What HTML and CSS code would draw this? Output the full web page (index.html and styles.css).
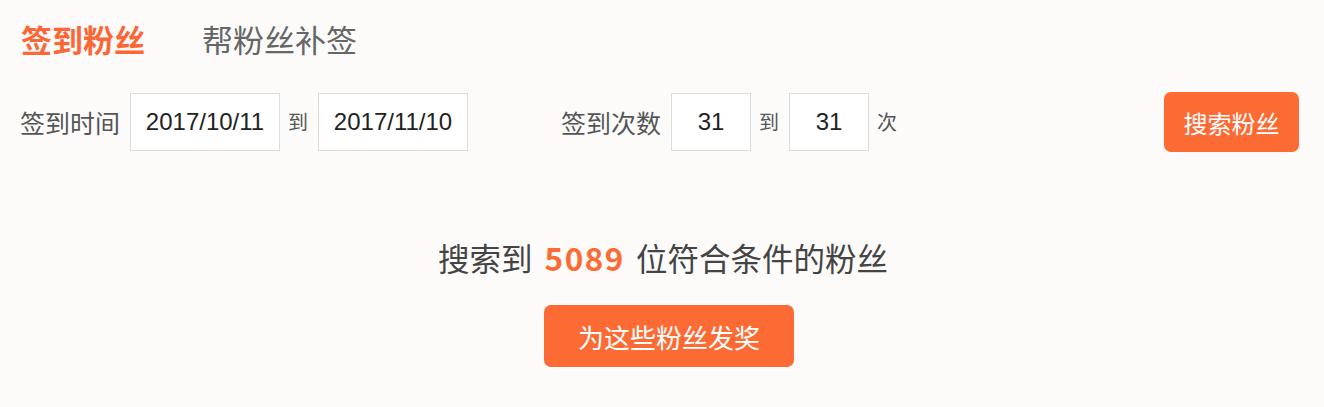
FILE: index.html
```html
<!DOCTYPE html>
<html lang="zh-CN">
<head>
<meta charset="utf-8">
<title>签到粉丝</title>
<link rel="stylesheet" href="styles.css">
</head>
<body>
<div class="page">
  <div class="tabs">
    <span class="tab tab-active">签到粉丝</span>
    <span class="tab">帮粉丝补签</span>
  </div>
  <div class="filter">
    <div class="group">
      <span class="label">签到时间</span>
      <input class="box box-date" type="text" value="2017/10/11" readonly>
      <span class="sep">到</span>
      <input class="box box-date" type="text" value="2017/11/10" readonly>
    </div>
    <div class="group group-count">
      <span class="label">签到次数</span>
      <input class="box box-num" type="text" value="31" readonly>
      <span class="sep">到</span>
      <input class="box box-num" type="text" value="31" readonly>
      <span class="sep">次</span>
    </div>
    <button class="btn btn-search" type="button">搜索粉丝</button>
  </div>
  <div class="result">
    <p class="result-text">搜索到 <strong class="count">5089</strong> 位符合条件的粉丝</p>
    <button class="btn btn-award" type="button">为这些粉丝发奖</button>
  </div>
</div>
</body>
</html>
```

FILE: styles.css
```css
html, body {
  margin: 0;
  padding: 0;
  background: #fcfbfa;
}
body {
  font-family: "Noto Sans CJK SC", "Noto Sans", sans-serif;
  color: #555;
}
.page {
  padding: 0 25px 0 20px;
}
.tabs {
  display: flex;
  align-items: center;
  gap: 57px;
  height: 78px;
  padding-left: 1px;
}
.tab {
  font-size: 31px;
  line-height: 40px;
  color: #666;
}
.tab-active {
  color: #fb6737;
  font-weight: bold;
}
.filter {
  display: flex;
  align-items: center;
  margin-top: 14px;
  height: 60px;
}
.group {
  display: flex;
  align-items: center;
}
.group-count {
  margin-left: 93px;
}
.label {
  font-size: 25px;
  line-height: 30px;
  color: #555;
  margin-right: 10px;
}
.sep {
  font-size: 20px;
  line-height: 30px;
  color: #555;
  margin: 0 10px 0 8px;
}
.box {
  box-sizing: border-box;
  height: 58px;
  margin: 0;
  padding: 0;
  border: 1px solid #dcdcdc;
  background: #fff;
  color: #222;
  font-family: "Liberation Sans", Arial, sans-serif;
  font-size: 24px;
  text-align: center;
  outline: none;
}
.box-date {
  width: 150px;
}
.box-num {
  width: 80px;
}
.btn {
  border: none;
  background: #fd6b35;
  color: #fff;
  font-family: "Noto Sans CJK SC", "Noto Sans", sans-serif;
  border-radius: 7px;
  padding: 0;
  cursor: pointer;
}
.btn-search {
  margin-left: auto;
  width: 135px;
  height: 60px;
  font-size: 24px;
}
.result {
  display: flex;
  flex-direction: column;
  align-items: center;
  padding-top: 85px;
  padding-left: 7px;
}
.result-text {
  margin: 0;
  font-size: 31.5px;
  line-height: 40px;
  color: #444;
}
.count {
  color: #fd6b35;
  font-weight: bold;
  letter-spacing: 1.5px;
  margin: 0 4px 0 5px;
}
.btn-award {
  margin-top: 28px;
  margin-left: 12px;
  width: 250px;
  height: 62px;
  font-size: 26px;
}
```
